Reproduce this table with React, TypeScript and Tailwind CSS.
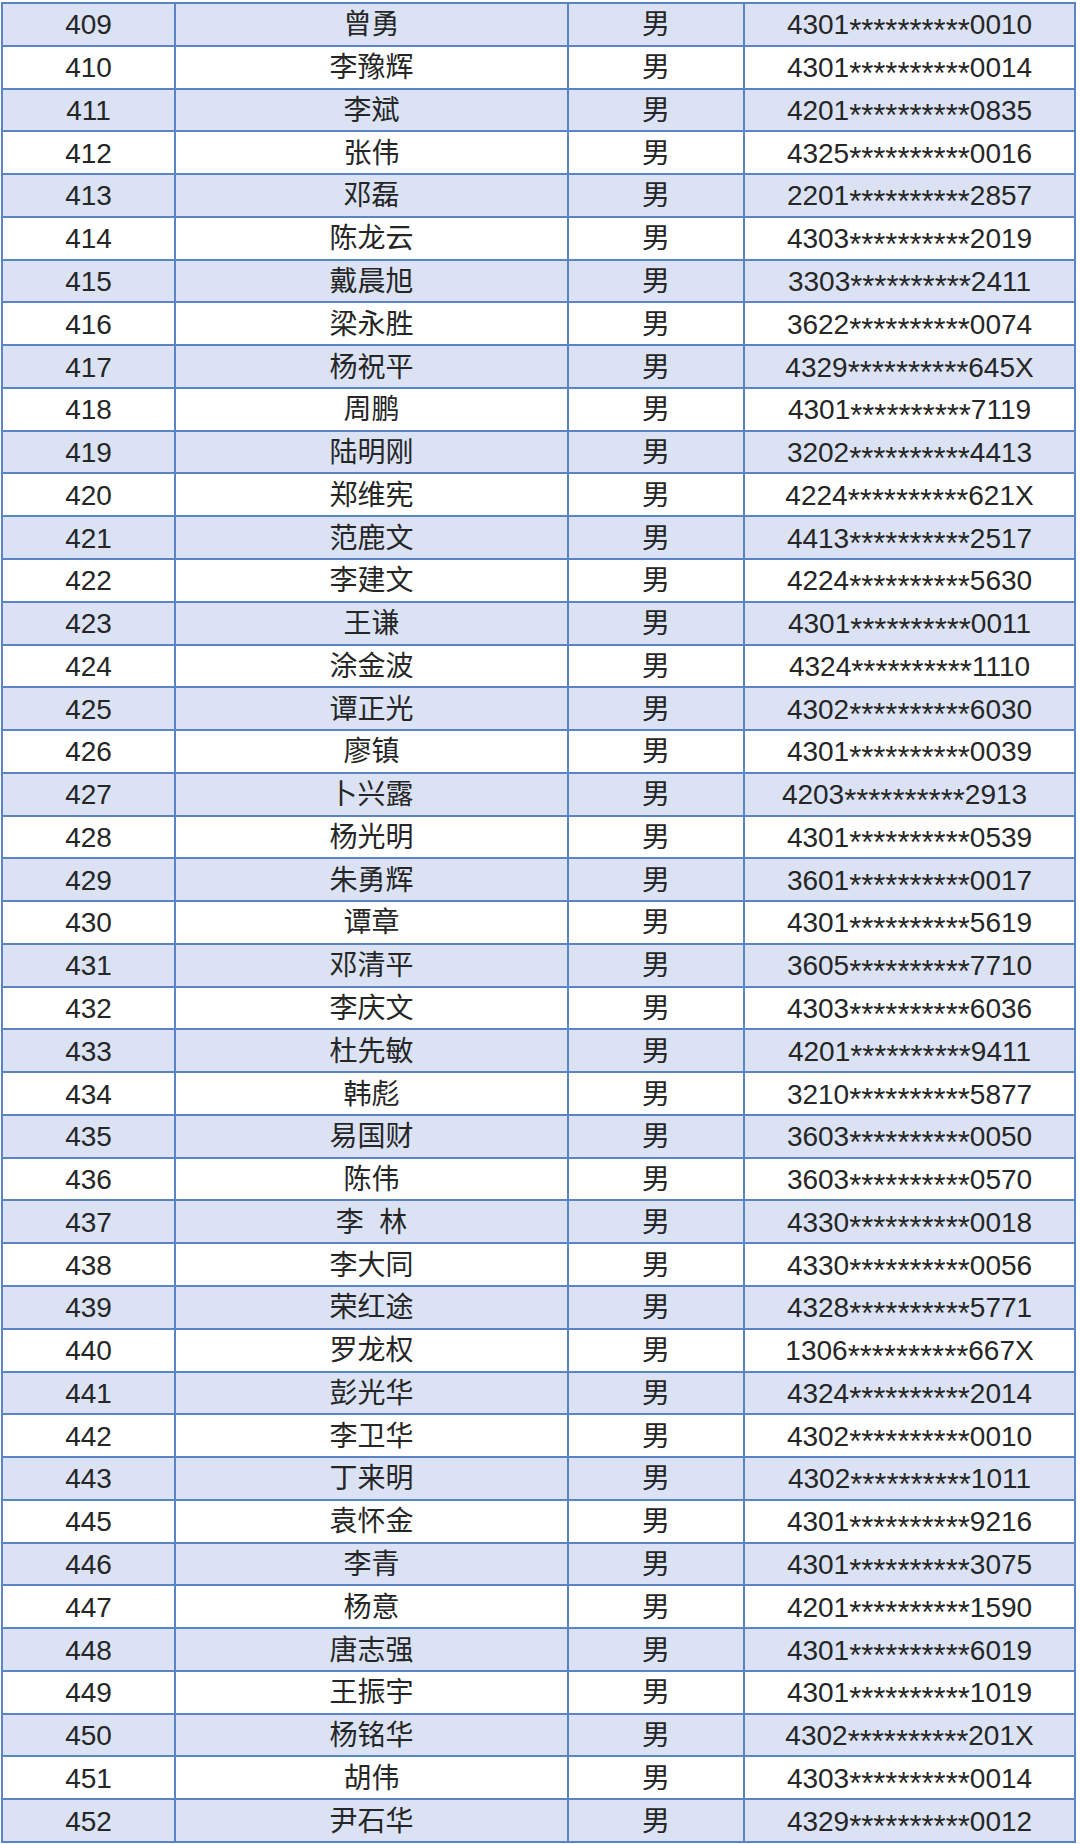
import React from 'react';

type Person = {
    no: number;
    name: string;
    head: string;
    tail: string;
};

const people: Person[] = [
    { no: 409, name: '曾勇', head: '4301', tail: '0010' },
    { no: 410, name: '李豫辉', head: '4301', tail: '0014' },
    { no: 411, name: '李斌', head: '4201', tail: '0835' },
    { no: 412, name: '张伟', head: '4325', tail: '0016' },
    { no: 413, name: '邓磊', head: '2201', tail: '2857' },
    { no: 414, name: '陈龙云', head: '4303', tail: '2019' },
    { no: 415, name: '戴晨旭', head: '3303', tail: '2411' },
    { no: 416, name: '梁永胜', head: '3622', tail: '0074' },
    { no: 417, name: '杨祝平', head: '4329', tail: '645X' },
    { no: 418, name: '周鹏', head: '4301', tail: '7119' },
    { no: 419, name: '陆明刚', head: '3202', tail: '4413' },
    { no: 420, name: '郑维宪', head: '4224', tail: '621X' },
    { no: 421, name: '范鹿文', head: '4413', tail: '2517' },
    { no: 422, name: '李建文', head: '4224', tail: '5630' },
    { no: 423, name: '王谦', head: '4301', tail: '0011' },
    { no: 424, name: '涂金波', head: '4324', tail: '1110' },
    { no: 425, name: '谭正光', head: '4302', tail: '6030' },
    { no: 426, name: '廖镇', head: '4301', tail: '0039' },
    { no: 427, name: '卜兴露', head: '4203', tail: '2913' },
    { no: 428, name: '杨光明', head: '4301', tail: '0539' },
    { no: 429, name: '朱勇辉', head: '3601', tail: '0017' },
    { no: 430, name: '谭章', head: '4301', tail: '5619' },
    { no: 431, name: '邓清平', head: '3605', tail: '7710' },
    { no: 432, name: '李庆文', head: '4303', tail: '6036' },
    { no: 433, name: '杜先敏', head: '4201', tail: '9411' },
    { no: 434, name: '韩彪', head: '3210', tail: '5877' },
    { no: 435, name: '易国财', head: '3603', tail: '0050' },
    { no: 436, name: '陈伟', head: '3603', tail: '0570' },
    { no: 437, name: '李  林', head: '4330', tail: '0018' },
    { no: 438, name: '李大同', head: '4330', tail: '0056' },
    { no: 439, name: '荣红途', head: '4328', tail: '5771' },
    { no: 440, name: '罗龙权', head: '1306', tail: '667X' },
    { no: 441, name: '彭光华', head: '4324', tail: '2014' },
    { no: 442, name: '李卫华', head: '4302', tail: '0010' },
    { no: 443, name: '丁来明', head: '4302', tail: '1011' },
    { no: 445, name: '袁怀金', head: '4301', tail: '9216' },
    { no: 446, name: '李青', head: '4301', tail: '3075' },
    { no: 447, name: '杨意', head: '4201', tail: '1590' },
    { no: 448, name: '唐志强', head: '4301', tail: '6019' },
    { no: 449, name: '王振宇', head: '4301', tail: '1019' },
    { no: 450, name: '杨铭华', head: '4302', tail: '201X' },
    { no: 451, name: '胡伟', head: '4303', tail: '0014' },
    { no: 452, name: '尹石华', head: '4329', tail: '0012' },
];

export default function App() {
    return (
        <div className="w-[1080px] h-[1844px] bg-white pt-[2px] pl-[1px] font-['Liberation_Sans','Noto_Sans_CJK_SC',sans-serif] text-[#262626]">
            <div className="w-[1075px] h-[1841px] bg-[#5b84c6] p-[2px] grid grid-cols-[171px_391px_174px_329px] grid-rows-[repeat(43,minmax(0,1fr))] gap-[2px]">
                {people.map((p, i) => {
                    const bg = i % 2 === 0 ? 'bg-[#dbe2f4]' : 'bg-white';
                    return (
                        <React.Fragment key={p.no}>
                            <div className={`${bg} flex items-center justify-center pt-[2px] text-[28px] leading-none`}>
                                {p.no}
                            </div>
                            <div className={`${bg} flex items-center justify-center pt-[2px] text-[28px] leading-none whitespace-pre`}>
                                {p.name}
                            </div>
                            <div className={`${bg} flex items-center justify-center pt-[2px] text-[28px] leading-none`}>
                                男
                            </div>
                            <div className={`${bg} flex items-center justify-center pt-[2px] text-[28px] leading-none ${p.no === 427 ? 'pr-[10px]' : ''}`}>
                                <span>{p.head}</span>
                                <span className="inline-block text-[31px] translate-y-[5px]">**********</span>
                                <span>{p.tail}</span>
                            </div>
                        </React.Fragment>
                    );
                })}
            </div>
        </div>
    );
}
